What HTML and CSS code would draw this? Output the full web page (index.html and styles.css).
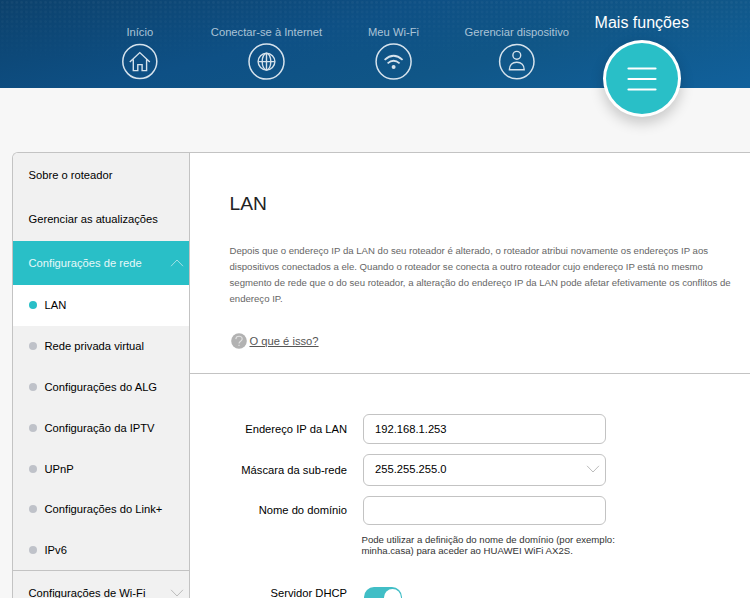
FILE: index.html
```html
<!DOCTYPE html>
<html lang="pt-BR">
<head>
<meta charset="utf-8">
<title>LAN</title>
<link rel="stylesheet" href="styles.css">
</head>
<body>
<header class="header">
  <nav class="nav">
    <a class="nav-item"><span class="nav-label">Início</span>
      <svg class="nav-icon" viewBox="0.2 0.4 38 38"><circle class="ring" cx="19" cy="19" r="17"/><path d="M9 19.500 19 10l10 9.500M12.500 17v11h4.500v-6h4.300v6h4.500v-11"/></svg></a>
    <a class="nav-item"><span class="nav-label">Conectar-se à Internet</span>
      <svg class="nav-icon" viewBox="0.5 0.4 38 38"><circle class="ring" cx="19" cy="19" r="17.500"/><circle cx="19" cy="19" r="8.400"/><ellipse cx="19" cy="19" rx="4.300" ry="8.400"/><path d="M19 10.700v16.600M10.700 19h16.600"/></svg></a>
    <a class="nav-item"><span class="nav-label">Meu Wi-Fi</span>
      <svg class="nav-icon" viewBox="0.4 0.4 38 38"><circle class="ring" cx="19" cy="19" r="17.500"/><path class="wifi" d="M10 17.200q9-8 18 0M13 20.800q6-5.200 12 0"/><circle class="dot" cx="19" cy="24.500" r="2"/></svg></a>
    <a class="nav-item"><span class="nav-label">Gerenciar dispositivo</span>
      <svg class="nav-icon" viewBox="0.2 0.4 38 38"><circle class="ring" cx="19" cy="19" r="17.200"/><circle cx="19" cy="12.700" r="3.900"/><path d="M11.600 27.200c0-4.500 2.800-7.500 7.400-7.500s7.400 3 7.400 7.500z"/></svg></a>
    <a class="nav-item active"><span class="nav-label">Mais funções</span>
      <span class="menu-button"><svg viewBox="0 0 30 26"><path d="M1.500 2.500h27M1.500 13h27M1.500 23.500h27"/></svg></span></a>
  </nav>
</header>
<div class="panel">
  <aside class="sidebar">
    <a class="group">Sobre o roteador</a>
    <a class="group">Gerenciar as atualizações</a>
    <a class="group open">Configurações de rede<svg class="chevron" viewBox="0 0 14 8"><path d="M1 7.200 7 1l6 6.200"/></svg></a>
    <a class="sub selected">LAN</a>
    <a class="sub">Rede privada virtual</a>
    <a class="sub">Configurações do ALG</a>
    <a class="sub">Configuração da IPTV</a>
    <a class="sub">UPnP</a>
    <a class="sub">Configurações do Link+</a>
    <a class="sub">IPv6</a>
    <a class="group wifi-group">Configurações de Wi-Fi<svg class="chevron" viewBox="0 0 14 8"><path d="M1 .8 7 7l6-6.200"/></svg></a>
  </aside>
  <main class="content">
    <section class="intro">
      <h1>LAN</h1>
      <p class="description">Depois que o endereço IP da LAN do seu roteador é alterado, o roteador atribui novamente os endereços IP aos dispositivos conectados a ele. Quando o roteador se conecta a outro roteador cujo endereço IP está no mesmo segmento de rede que o do seu roteador, a alteração do endereço IP da LAN pode afetar efetivamente os conflitos de endereço IP.</p>
      <div class="help"><svg viewBox="0 0 16 16"><circle cx="8" cy="8" r="7.800"/><path d="M4.800 6.100C5 2.300 11.200 2.300 11.200 6c0 2.200-3.200 2.300-3.200 4.500M8 11.800v1.300"/></svg><a>O que é isso?</a></div>
    </section>
    <section class="form">
      <div class="row ip-row"><label>Endereço IP da LAN</label><div class="field">192.168.1.253</div></div>
      <div class="row mask-row"><label>Máscara da sub-rede</label><div class="field">255.255.255.0<svg class="chevron" viewBox="0 0 14 8"><path d="M1 .8 7 7l6-6.200"/></svg></div></div>
      <div class="row domain-row"><label>Nome do domínio</label><div class="field"></div></div>
      <p class="hint">Pode utilizar a definição do nome de domínio (por exemplo: minha.casa) para aceder ao HUAWEI WiFi AX2S.</p>
      <div class="row dhcp-row"><label>Servidor DHCP</label><span class="toggle"></span></div>
    </section>
  </main>
</div>
</body>
</html>
```
FILE: styles.css
```css
* { box-sizing: border-box; }
html, body { height: 598px; overflow: hidden; }
body {
  margin: 0;
  background: #f7f7f7;
  color: #000;
  font: 11.2px/16px "Liberation Sans", Arial, sans-serif;
}
svg { fill: none; stroke: currentColor; flex: none; }

.header {
  position: relative;
  height: 88px;
  background: linear-gradient(165deg, #0c416c 0%, #0e5085 40%, #105687 65%, #11619c 100%);
}
/* dotted texture that fades out towards the bottom */
.header::before {
  content: "";
  position: absolute;
  inset: 0;
  background: radial-gradient(circle, #ffffff0a 1px, transparent 2px) 0 0 / 4.8px 4.8px;
  -webkit-mask-image: linear-gradient(#000, transparent 75%);
  mask-image: linear-gradient(#000, transparent 75%);
}
.nav {
  position: relative;
  display: grid;
  grid-template-columns: 126.5px 127px 127px 119.5px 130.5px;
  padding-left: 76.5px;
}
.nav-item {
  display: flex;
  flex-direction: column;
  align-items: center;
  padding-top: 24px;
  color: #abc3d6;
  white-space: nowrap;
}
.nav-icon {
  width: 38px;
  height: 38px;
  margin-top: 3px;
  color: #d5e2ec;
  stroke-width: 1.4;
}
.nav-icon .ring { stroke-width: 1.5; }
.nav-icon .wifi { stroke-width: 1.8; }
.nav-icon .dot { fill: currentColor; stroke: none; }
.nav-item.active {
  padding-top: 13px;
  color: #fff;
  font-size: 16px;
  line-height: 20px;
}
.menu-button {
  display: flex;
  align-items: center;
  justify-content: center;
  width: 78px;
  height: 77px;
  margin-top: 7.4px;
  border: 3px solid #fff;
  border-radius: 50%;
  background: #29bfc7;
  box-shadow: 0 6px 14px #00000033;
}
.menu-button svg {
  width: 30px;
  height: 26px;
  stroke-width: 2.2;
  stroke-linecap: round;
}

.panel {
  display: flex;
  width: 738px;
  height: 446px;
  margin: 64px 0 0 12px;
  border: 1px solid #c3c3c3;
  border-width: 1px 0 0 1px;
  border-radius: 6px 0 0 0;
  overflow: hidden;
  background: #fff;
}
.sidebar {
  flex: none;
  width: 177px;
  border-right: 1px solid #c3c3c3;
  background: #f1f1f1;
}
.group {
  display: flex;
  align-items: center;
  justify-content: space-between;
  height: 44px;
  padding: 0 5px 0 15.5px;
}
.chevron { width: 14px; height: 8px; color: #bcbcbc; }
.group.open { background: #29bfc7; color: #e6f8f9; }
.group.open .chevron { color: #9fe0e4; }
.sub {
  display: flex;
  align-items: center;
  gap: 7.5px;
  height: 40.8px;
  padding-left: 16px;
}
.sub::before {
  content: "";
  width: 8px;
  height: 8px;
  border-radius: 50%;
  background: #bfc2c9;
}
.sub.selected { background: #fff; }
.sub.selected::before { background: #29bfc7; }
.wifi-group { border-top: 1px solid #c3c3c3; height: 44px; margin-top: -0.4px; }

.content { flex: 1; }
.intro {
  height: 221px;
  padding: 38px 0 0 39.5px;
  border-bottom: 1px solid #c3c3c3;
}
h1 {
  margin: 0;
  color: #222;
  font-size: 19.2px;
  font-weight: 400;
  line-height: 26px;
}
.description {
  width: 506px;
  margin: 26px 0 0;
  color: #666;
  font-size: 9.6px;
  line-height: 16px;
}
.help {
  display: flex;
  align-items: center;
  gap: 2.5px;
  margin-top: 26px;
  padding-left: 1.5px;
  color: #555;
}
.help a { text-decoration: underline; }
.help svg { width: 16px; height: 16px; }
.help circle { fill: #b2b2b2; stroke: none; }
.help path { stroke: #e2e2e2; stroke-width: 1.1; }

.form { padding-top: 40px; }
.row { display: flex; align-items: center; }
.row label { width: 157px; margin-right: 16px; text-align: right; }
.field {
  display: flex;
  align-items: center;
  justify-content: space-between;
  width: 243px;
  height: 30px;
  padding: 0 5px 0 11px;
  border: 1px solid #c3c3c3;
  border-radius: 6px;
}
.mask-row { margin-top: 10px; }
.mask-row .field { height: 32px; padding-bottom: 2px; }
.domain-row { margin-top: 10px; }
.domain-row .field { height: 29px; }
.domain-row label { padding-bottom: 2px; }
.hint {
  width: 265px;
  margin: 9px 0 0 171.5px;
  color: #333;
  font-size: 9.6px;
  line-height: 11px;
}
.dhcp-row { margin-top: 29px; align-items: flex-start; }
.toggle {
  display: flex;
  align-items: center;
  justify-content: flex-end;
  width: 38px;
  height: 20px;
  margin: 2px 0 0 1px;
  padding-right: 1px;
  border-radius: 10px;
  background: #41bec6;
}
.toggle::before {
  content: "";
  width: 17px;
  height: 17px;
  border-radius: 50%;
  background: #fff;
}
```
